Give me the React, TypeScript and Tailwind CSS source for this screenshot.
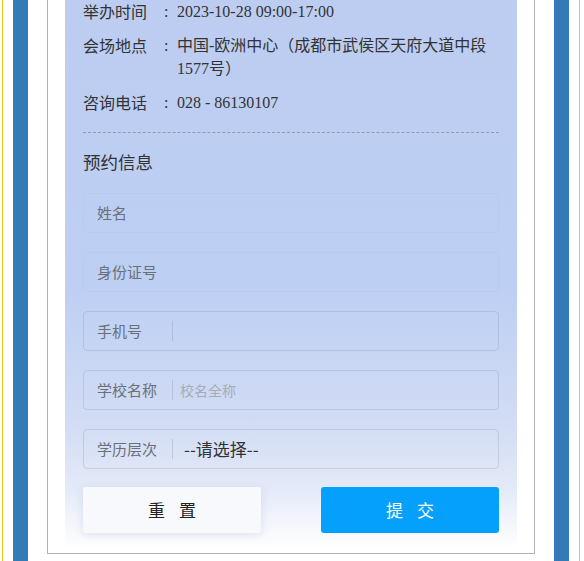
const info = [
  { label: "举办时间", value: "2023-10-28 09:00-17:00" },
  { label: "会场地点", value: "中国-欧洲中心（成都市武侯区天府大道中段1577号）" },
  { label: "咨询电话", value: "028 - 86130107" },
];

const sans = "font-['Noto_Sans_CJK_SC','Noto_Sans',sans-serif]";

function Field({ label, placeholder, faint, divider }: { label: string; placeholder?: string; faint?: boolean; divider?: boolean }) {
  return (
    <div
      className={`flex h-10 items-center rounded-[4px] border ${
        faint ? "border-[rgba(150,165,200,0.1)]" : "border-[rgba(130,145,180,0.28)]"
      }`}
    >
      <span className="w-[88px] shrink-0 pl-[13px] text-[15px] text-[#6b6f78]">{label}</span>
      {divider && <span className="h-5 w-px bg-[rgba(130,140,170,0.3)]" />}
      {placeholder && <span className="pl-[7px] text-[14px] text-[#a6abb6]">{placeholder}</span>}
    </div>
  );
}

export default function App() {
  return (
    <div className={`flex h-[561px] w-[584px] overflow-hidden bg-white ${sans}`}>
      <div className="w-[2px] shrink-0" />
      <div className="w-px shrink-0 bg-[#f5c518]" />
      <div className="w-[10px] shrink-0" />
      <div className="w-[15px] shrink-0 bg-[#337ab7]" />
      <div className="w-[19px] shrink-0" />

      <div className="flex h-[554px] w-[488px] shrink-0 flex-col border-x border-b border-[#b3b3b3] px-[17px] pb-[4px]">
        <div className="flex flex-1 flex-col bg-[linear-gradient(to_bottom,#bccdf1_0px,#bdcff3_290px,#d3ddf4_430px,#e4eaf8_490px,#ffffff_548px)] px-[18px]">
          <div className="flex flex-col gap-[11px] text-[16px] leading-[23px] text-[#333]">
            {info.map((row) => (
              <div key={row.label} className="flex">
                <span className="w-[80px] shrink-0">{row.label}</span>
                <span className="w-[14px] shrink-0 pl-[1px] font-['Liberation_Serif',serif]">:</span>
                <span className="font-['Liberation_Serif','Noto_Sans_CJK_SC',serif]">{row.value}</span>
              </div>
            ))}
          </div>

          <div className="mt-[18px] border-t border-dashed border-[#8e9bb3]" />

          <h2 className="mt-[17px] text-[17.5px] leading-[24px] text-[#333]">预约信息</h2>

          <div className="mt-[19px] flex flex-col gap-[19px]">
            <Field label="姓名" faint />
            <Field label="身份证号" faint />
            <Field label="手机号" divider />
            <Field label="学校名称" divider placeholder="校名全称" />
            <div className="flex h-10 items-center rounded-[4px] border border-[rgba(130,145,180,0.28)]">
              <span className="w-[88px] shrink-0 pl-[13px] text-[15px] text-[#6b6f78]">学历层次</span>
              <span className="h-5 w-px bg-[rgba(130,140,170,0.3)]" />
              <span className="pl-[11px] text-[17px] text-[#333]">--请选择--</span>
            </div>
          </div>

          <div className="mt-[18px] flex justify-between">
            <button
              type="button"
              className="h-[46px] w-[178px] rounded-[3px] bg-[#f8f9fc] text-[17px] tracking-[14px] text-[#222] shadow-[0_2px_8px_rgba(140,160,200,0.25)]"
            >
              <span className="pl-[14px]">重置</span>
            </button>
            <button
              type="button"
              className="h-[46px] w-[178px] rounded-[3px] bg-[#05a0fb] text-[17px] tracking-[14px] text-white"
            >
              <span className="pl-[14px]">提交</span>
            </button>
          </div>
        </div>
      </div>

      <div className="w-[19px] shrink-0" />
      <div className="w-[15px] shrink-0 bg-[#337ab7]" />
      <div className="w-[10px] shrink-0" />
      <div className="w-px shrink-0 bg-[#f5c518]" />
    </div>
  );
}
